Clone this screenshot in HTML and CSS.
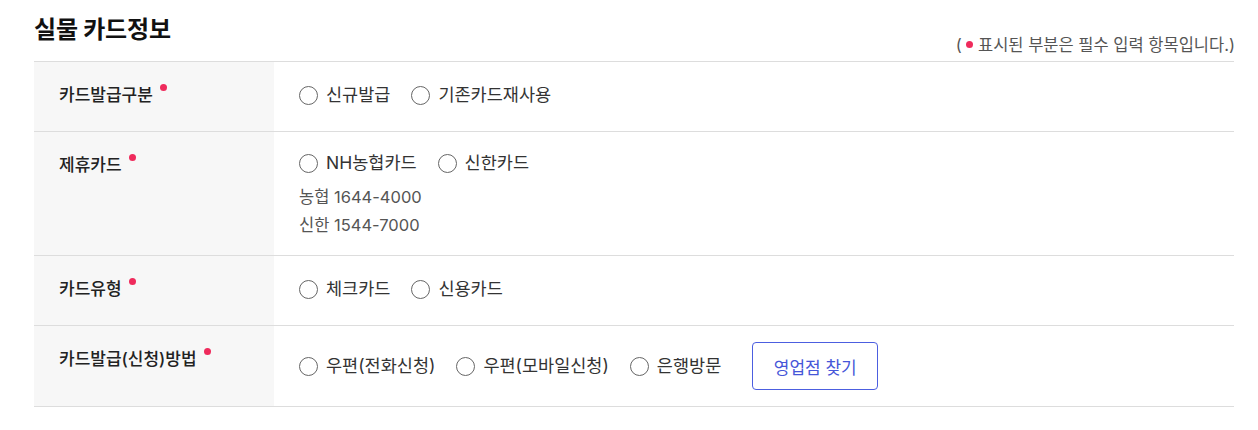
FILE: index.html
```html
<!DOCTYPE html>
<html lang="ko">
<head>
<meta charset="utf-8">
<link rel="stylesheet" href="styles.css">
</head>
<body>
<div class="wrap">
  <div class="head">
    <h2 class="title">실물 카드정보</h2>
    <p class="req-note">( <span class="dot"></span> 표시된 부분은 필수 입력 항목입니다.)</p>
  </div>
  <table class="form">
    <tr>
      <th><span class="label">카드발급구분<span class="dot sup"></span></span></th>
      <td>
        <div class="radios">
          <label class="radio"><span class="circle"></span>신규발급</label>
          <label class="radio"><span class="circle"></span>기존카드재사용</label>
        </div>
      </td>
    </tr>
    <tr>
      <th><span class="label">제휴카드<span class="dot sup"></span></span></th>
      <td class="tight">
        <div class="radios">
          <label class="radio"><span class="circle"></span>NH농협카드</label>
          <label class="radio"><span class="circle"></span>신한카드</label>
        </div>
        <ul class="notes">
          <li>농협 1644-4000</li>
          <li>신한 1544-7000</li>
        </ul>
      </td>
    </tr>
    <tr>
      <th><span class="label">카드유형<span class="dot sup"></span></span></th>
      <td>
        <div class="radios">
          <label class="radio"><span class="circle"></span>체크카드</label>
          <label class="radio"><span class="circle"></span>신용카드</label>
        </div>
      </td>
    </tr>
    <tr>
      <th><span class="label">카드발급(신청)방법<span class="dot sup"></span></span></th>
      <td class="mid">
        <div class="radios">
          <label class="radio"><span class="circle"></span>우편(전화신청)</label>
          <label class="radio"><span class="circle"></span>우편(모바일신청)</label>
          <label class="radio"><span class="circle"></span>은행방문</label>
          <button class="btn" type="button">영업점 찾기</button>
        </div>
      </td>
    </tr>
  </table>
</div>
</body>
</html>
```

FILE: styles.css
```css
* { box-sizing: border-box; }
body {
  margin: 0;
  background: #fff;
  font-family: Inter, "Noto Sans CJK KR", sans-serif;
  color: #222;
}
.wrap {
  width: 1200px;
  margin-left: 34px;
  padding-top: 13px;
}
.head {
  display: flex;
  justify-content: space-between;
  align-items: flex-end;
  height: 48px;
  padding-bottom: 5px;
}
.title {
  margin: 0;
  font-size: 24px;
  font-weight: 700;
  line-height: 34px;
  color: #111;
  align-self: flex-start;
  letter-spacing: -0.2px;
}
.req-note {
  margin: 0;
  font-size: 16.5px;
  line-height: 22px;
  color: #555;
  margin-right: -1px;
}
.dot {
  display: inline-block;
  width: 7px;
  height: 7px;
  border-radius: 50%;
  background: #ef2b5c;
  vertical-align: middle;
  position: relative;
  top: -2px;
}
.form {
  width: 100%;
  border-collapse: collapse;
  border-top: 1px solid #ddd;
}
.form tr { border-bottom: 1px solid #ddd; }
.form th {
  width: 240px;
  background: #f7f7f7;
  text-align: left;
  vertical-align: top;
  padding: 20px 25px 23px;
  font-size: 17px;
  font-weight: 500;
  line-height: 26px;
  color: #222;
}
.label { position: relative; }
.dot.sup {
  position: relative;
  top: -9px;
  margin-left: 7px;
  vertical-align: middle;
}
.form td {
  padding: 20px 25px 16px;
  vertical-align: top;
}
.form td.tight { padding-top: 18px; }
.form td.mid {
  padding: 16px 25px;
  vertical-align: middle;
}
.radios {
  display: flex;
  align-items: center;
  gap: 21px;
}
.radio {
  display: flex;
  align-items: center;
  gap: 8px;
  font-size: 17.5px;
  line-height: 26px;
  color: #333;
}
.circle {
  width: 19px;
  height: 19px;
  border: 1.5px solid #666;
  border-radius: 50%;
  background: #fff;
  flex: none;
}
.notes {
  list-style: none;
  margin: 7px 0 0;
  padding: 0;
}
.notes li {
  font-size: 16.5px;
  line-height: 28px;
  color: #555;
}
.btn {
  width: 126px;
  height: 48px;
  margin-left: 10px;
  border: 1px solid #4c5ee0;
  border-radius: 4px;
  background: #fff;
  color: #4656d8;
  font-family: inherit;
  font-size: 17px;
}
```
